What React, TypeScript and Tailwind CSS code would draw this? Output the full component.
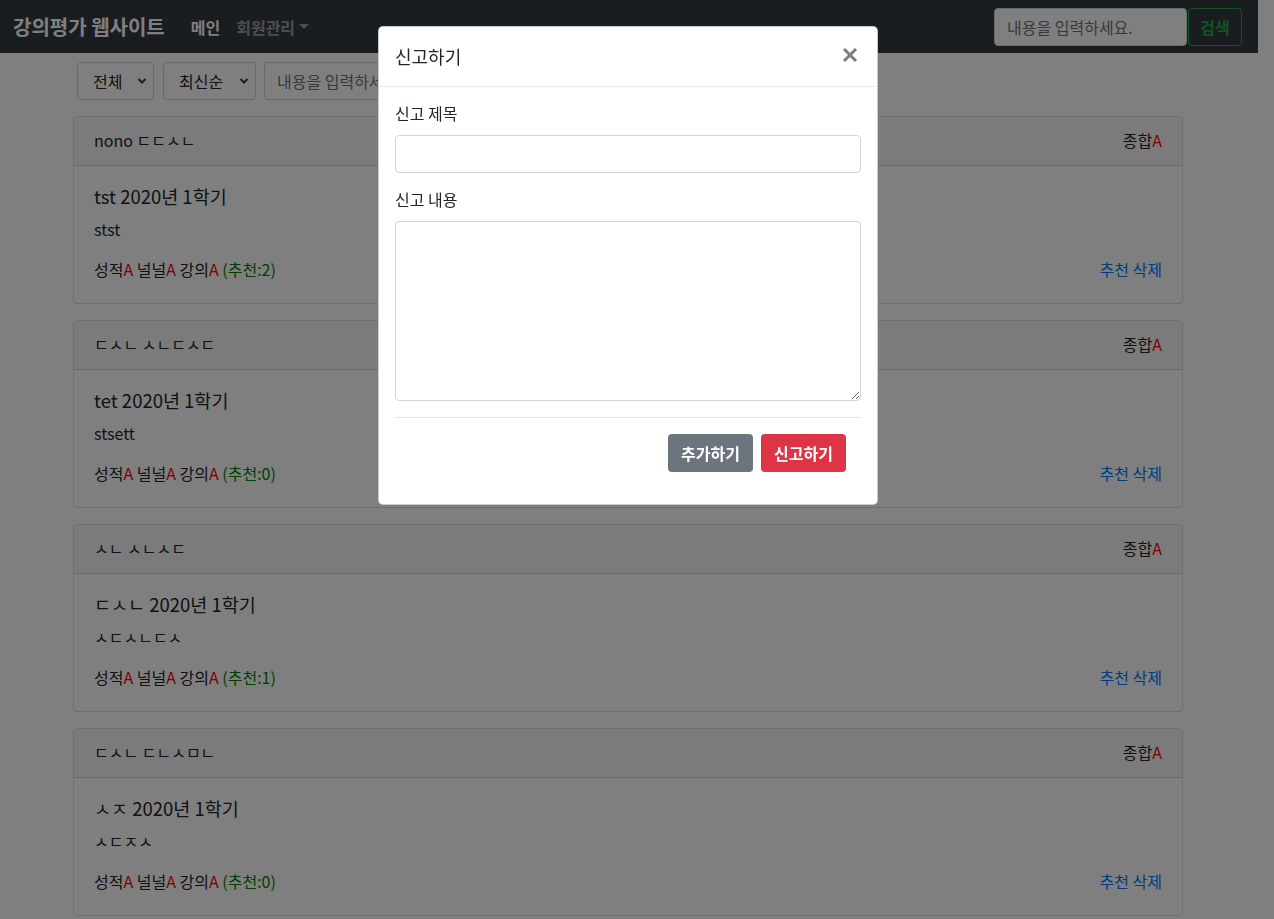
import { FC } from 'react';

const Chevron: FC = () => (
  <svg width="10" height="8" viewBox="0 0 10 8" className="text-[#343a40]">
    <polyline points="1.5,2 5,5.5 8.5,2" fill="none" stroke="currentColor" strokeWidth="2" />
  </svg>
);

interface Review {
  header: string;
  title: string;
  text: string;
  likes: number;
}

const reviews: Review[] = [
  { header: 'nono ㄷㄷㅅㄴ', title: 'tst 2020년 1학기', text: 'stst', likes: 2 },
  { header: 'ㄷㅅㄴ ㅅㄴㄷㅅㄷ', title: 'tet 2020년 1학기', text: 'stsett', likes: 0 },
  { header: 'ㅅㄴ ㅅㄴㅅㄷ', title: 'ㄷㅅㄴ 2020년 1학기', text: 'ㅅㄷㅅㄴㄷㅅ', likes: 1 },
  { header: 'ㄷㅅㄴ ㄷㄴㅅㅁㄴ', title: 'ㅅㅈ 2020년 1학기', text: 'ㅅㄷㅈㅅ', likes: 0 },
];

const ReviewCard: FC<{ review: Review }> = ({ review }) => (
  <div className="mb-4 rounded border border-black/[.125] bg-white">
    <div className="flex items-center justify-between border-b border-black/[.125] bg-[#f7f7f7] px-5 pb-[13px] pt-[11px] leading-6">
      <span>{review.header}</span>
      <span>
        종합<span className="text-[#ff0000]">A</span>
      </span>
    </div>
    <div className="px-5 pb-[22px] pt-[19px]">
      <h5 className="mb-[10px] text-[18.5px] leading-[22px]">{review.title}</h5>
      <p className="mb-4 leading-6">{review.text}</p>
      <div className="flex justify-between leading-6">
        <span>
          성적<span className="text-[#ff0000]">A</span> 널널<span className="text-[#ff0000]">A</span> 강의
          <span className="text-[#ff0000]">A</span> <span className="text-[#008000]">(추천:{review.likes})</span>
        </span>
        <span className="text-[#007bff]">
          <a>추천</a> <a>삭제</a>
        </span>
      </div>
    </div>
  </div>
);

export default function App() {
  return (
    <div
      className="relative min-h-screen bg-white pr-[16px] text-base text-[#212529]"
      style={{ fontFamily: '"Noto Sans CJK KR", "Noto Sans", sans-serif' }}
    >
      {/* navbar */}
      <nav className="flex h-[53px] items-center justify-between bg-[#343a40] pl-[13px] pr-4">
        <div className="flex items-center">
          <span className="mr-[18px] text-[20px] font-bold text-white">강의평가 웹사이트</span>
          <span className="px-2 font-semibold text-white">메인</span>
          <span className="flex items-center px-2 font-semibold text-white/50">
            회원관리
            <svg width="10" height="6" viewBox="0 0 10 6" className="ml-1">
              <polygon points="0,0 10,0 5,5" fill="currentColor" />
            </svg>
          </span>
        </div>
        <div className="flex items-center gap-[1px]">
          <input
            className="h-[38px] w-[193px] rounded border border-[#ced4da] bg-white px-3 text-base placeholder:text-[#6c757d]"
            placeholder="내용을 입력하세요."
          />
          <button className="h-[38px] w-[54px] rounded border border-[#28a745] text-base font-semibold text-[#28a745]">
            검색
          </button>
        </div>
      </nav>

      {/* list */}
      <div className="ml-[73px] w-[1110px] pt-[9px]">
        <div className="mb-4 flex items-center">
          <div className="ml-1 flex h-[38px] w-[77px] items-center justify-between rounded border border-[#ced4da] bg-white pl-[15px] pr-[6px]">
            <span>전체</span>
            <Chevron />
          </div>
          <div className="ml-[9px] flex h-[38px] w-[93px] items-center justify-between rounded border border-[#ced4da] bg-white pl-[15px] pr-[6px]">
            <span>최신순</span>
            <Chevron />
          </div>
          <input
            className="ml-2 h-[38px] w-[200px] rounded border border-[#ced4da] bg-white px-3 text-base placeholder:text-[#6c757d]"
            placeholder="내용을 입력하세요."
          />
          <button className="ml-2 h-[38px] rounded border border-[#28a745] px-3 text-[#28a745]">검색</button>
        </div>
        {reviews.map((r, i) => (
          <ReviewCard key={i} review={r} />
        ))}
      </div>

      {/* backdrop */}
      <div className="fixed inset-0 bg-black/50" />

      {/* modal */}
      <div className="fixed inset-0 flex items-start justify-center pr-[18px] pt-[26px]">
        <div className="w-[500px] rounded-[5px] border border-black/20 bg-white">
          <div className="flex items-center justify-between border-b border-[#e9ecef] px-4 py-4">
            <h5 className="text-[18px] leading-[27px]">신고하기</h5>
            <svg width="16" height="16" viewBox="0 0 16 16" className="mb-1 mr-[3px]">
              <line x1="2" y1="2" x2="14" y2="14" stroke="#7f7f7f" strokeWidth="3" />
              <line x1="14" y1="2" x2="2" y2="14" stroke="#7f7f7f" strokeWidth="3" />
            </svg>
          </div>
          <div className="px-4 pb-8 pt-[14px]">
            <label className="mb-[10px] block leading-6">신고 제목</label>
            <input className="mb-[14px] block h-[38px] w-full rounded border border-[#ced4da] px-3" />
            <label className="mb-[10px] block leading-6">신고 내용</label>
            <textarea className="block h-[180px] w-full rounded border border-[#ced4da] px-3 py-1.5" />
            <hr className="my-4 border-black/10" />
            <div className="flex justify-end gap-2 pr-[15px]">
              <button className="h-[38px] w-[85px] rounded bg-[#6c757d] font-semibold text-white">추가하기</button>
              <button className="h-[38px] w-[85px] rounded bg-[#dc3545] font-semibold text-white">신고하기</button>
            </div>
          </div>
        </div>
      </div>
    </div>
  );
}
